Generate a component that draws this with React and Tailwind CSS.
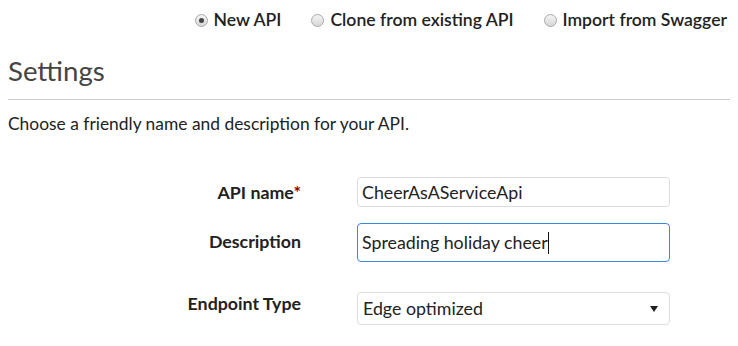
import { useState } from "react";

const Radio = ({ checked, label }) => (
  <label className="flex items-center gap-[6px] cursor-pointer">
    <span className="w-[13px] h-[13px] rounded-full border border-[#a9a9a9] bg-gradient-to-b from-[#f4f4f4] to-[#d8d8d8] flex items-center justify-center">
      {checked && <span className="w-[5px] h-[5px] rounded-full bg-[#444]" />}
    </span>
    <span>{label}</span>
  </label>
);

const App = () => {
  const [name, setName] = useState("CheerAsAServiceApi");

  return (
    <div className="w-[738px] h-[346px] overflow-hidden bg-white text-[#222] font-['Lato','Noto_Sans',sans-serif]">
      {/* api source choice */}
      <div className="flex justify-end gap-[30px] pr-[11px] pt-[8px] text-[17.6px] font-semibold leading-[24px]">
        <Radio checked label="New API" />
        <Radio label="Clone from existing API" />
        <Radio label="Import from Swagger" />
      </div>

      <div className="px-[8px]">
        <h2 className="mt-[23px] text-[27.6px] leading-[32px] text-[#444]">Settings</h2>
        <div className="mt-[12px] border-t border-[#ccc]" />
        <p className="mt-[13px] text-[17.4px] leading-[22px]">
          Choose a friendly name and description for your API.
        </p>
      </div>

      <div className="mt-[42px] flex flex-col text-[17.8px]">
        <div className="flex items-center">
          <div className="w-[301px] text-right font-bold">
            API name<span className="text-[#8b0000]">*</span>
          </div>
          <input
            value={name}
            onChange={(e) => setName(e.target.value)}
            className="ml-[56px] w-[313px] h-[30px] px-[4px] border border-[#ddd] rounded-[4px] outline-none"
          />
        </div>
        <div className="mt-[16px] flex items-center">
          <div className="w-[301px] text-right font-bold -mt-[2px]">Description</div>
          {/* focused field, caret drawn after the text */}
          <div className="ml-[56px] w-[313px] h-[39px] px-[4px] border border-[#3a88dc] rounded-[4px] flex items-center">
            <span>Spreading holiday cheer</span>
            <span className="w-px h-[22px] bg-[#111]" />
          </div>
        </div>
        <div className="mt-[30px] flex items-start">
          <div className="w-[301px] text-right font-bold -mt-[2px]">Endpoint Type</div>
          <div className="ml-[56px] w-[313px] h-[33px] px-[5px] border border-[#ddd] rounded-[4px] flex items-center justify-between">
            <span>Edge optimized</span>
            <svg width="8" height="6" viewBox="0 0 8 6" className="mr-[6px]">
              <path d="M0 0 H8 L4 6 Z" fill="#222" />
            </svg>
          </div>
        </div>
      </div>
    </div>
  );
};

export default App;
